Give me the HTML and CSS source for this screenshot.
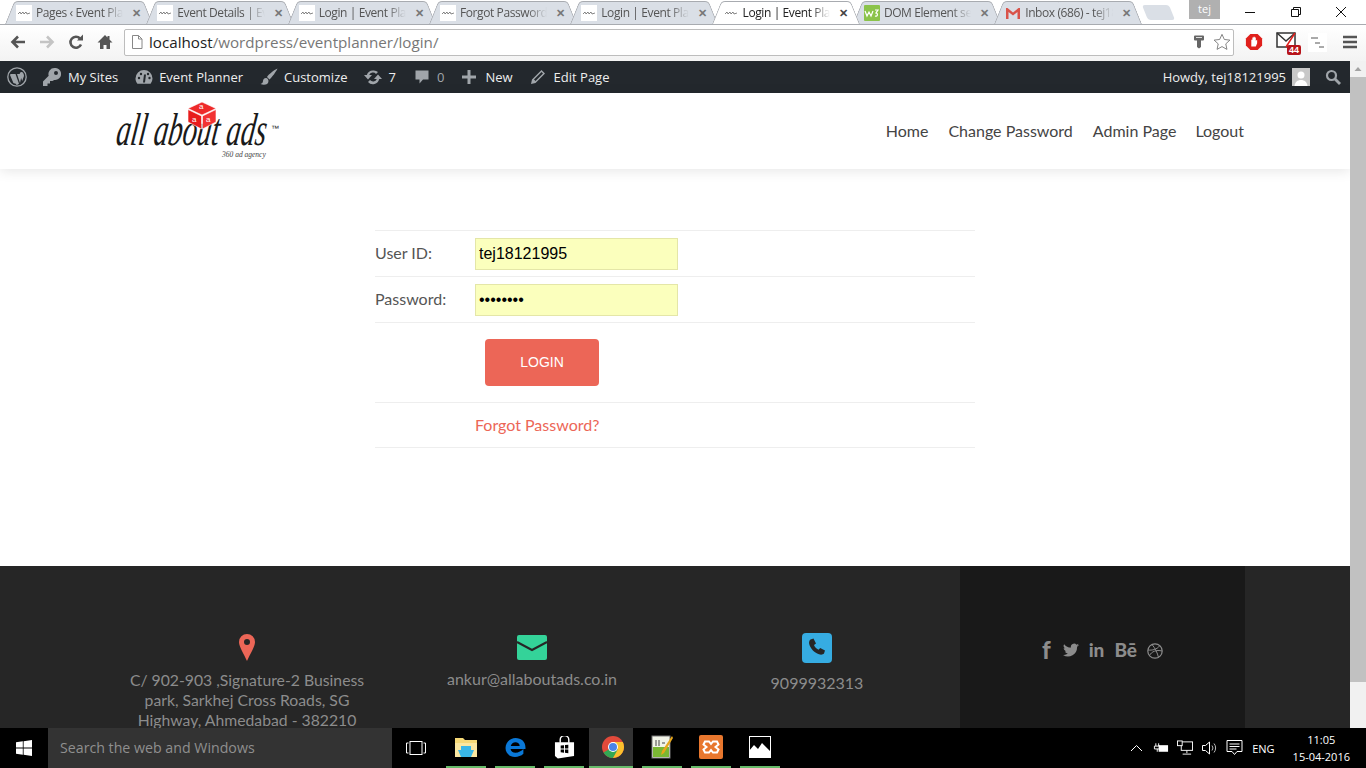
FILE: index.html
```html
<!DOCTYPE html>
<html lang="en">
<head>
    <meta charset="UTF-8">
    <meta name="viewport" content="width=device-width, initial-scale=1.0">
    <title>Login | Event Planner</title>
    <link rel="stylesheet" href="styles.css">
</head>
<body>
    <!-- browser window -->
    <div class="tabstrip">
        <div class="tab"><svg class="fav" viewBox="0 0 16 16"><rect width="16" height="16" fill="#fff"/><path d="M2 9l2-2 1 2 2-2 1 2 2-2 1 2 3-1" fill="none" stroke="#555" stroke-width=".7"/></svg><span class="tab-title">Pages ‹ Event Planner</span><span class="tab-x">✕</span></div>
        <div class="tab"><svg class="fav" viewBox="0 0 16 16"><rect width="16" height="16" fill="#fff"/><path d="M2 9l2-2 1 2 2-2 1 2 2-2 1 2 3-1" fill="none" stroke="#555" stroke-width=".7"/></svg><span class="tab-title">Event Details | Event</span><span class="tab-x">✕</span></div>
        <div class="tab"><svg class="fav" viewBox="0 0 16 16"><rect width="16" height="16" fill="#fff"/><path d="M2 9l2-2 1 2 2-2 1 2 2-2 1 2 3-1" fill="none" stroke="#555" stroke-width=".7"/></svg><span class="tab-title">Login | Event Planner</span><span class="tab-x">✕</span></div>
        <div class="tab"><svg class="fav" viewBox="0 0 16 16"><rect width="16" height="16" fill="#fff"/><path d="M2 9l2-2 1 2 2-2 1 2 2-2 1 2 3-1" fill="none" stroke="#555" stroke-width=".7"/></svg><span class="tab-title">Forgot Password | Ev</span><span class="tab-x">✕</span></div>
        <div class="tab"><svg class="fav" viewBox="0 0 16 16"><rect width="16" height="16" fill="#fff"/><path d="M2 9l2-2 1 2 2-2 1 2 2-2 1 2 3-1" fill="none" stroke="#555" stroke-width=".7"/></svg><span class="tab-title">Login | Event Planner</span><span class="tab-x">✕</span></div>
        <div class="tab tab-active"><svg class="fav" viewBox="0 0 16 16"><rect width="16" height="16" fill="#fff"/><path d="M2 9l2-2 1 2 2-2 1 2 2-2 1 2 3-1" fill="none" stroke="#555" stroke-width=".7"/></svg><span class="tab-title">Login | Event Planner</span><span class="tab-x">✕</span></div>
        <div class="tab"><svg class="fav" viewBox="0 0 16 16"><rect width="16" height="16" rx="1" fill="#8bc34a"/><path d="M1 6l2 5 2-4 2 4 2-5" fill="none" stroke="#fff" stroke-width="1.2"/><path d="M11 5h3l-2 3c2 0 2 4-1 3" fill="none" stroke="#fff" stroke-width="1.2"/></svg><span class="tab-title">DOM Element seque</span><span class="tab-x">✕</span></div>
        <div class="tab"><svg class="fav" viewBox="0 0 16 16"><path d="M1 3v11h2.500V7L8 10.500 12.500 7v7H15V3h-1.500L8 7.500 2.500 3z" fill="#d9534a"/></svg><span class="tab-title">Inbox (686) - tej1812</span><span class="tab-x">✕</span></div>
        <div class="tab-new"></div>
        <div class="win-user">tej</div>
        <div class="win-btns">
            <svg viewBox="0 0 12 12" width="12" height="12"><path d="M1 6.500h10" stroke="#111" fill="none"/></svg>
            <svg viewBox="0 0 12 12" width="12" height="12"><path d="M1.500 3.500h7v7h-7zM3.500 3.500v-2h7v7h-2" stroke="#111" fill="none"/></svg>
            <svg viewBox="0 0 12 12" width="12" height="12"><path d="M1 1l10 10M11 1L1 11" stroke="#111" fill="none"/></svg>
        </div>
    </div>

    <div class="toolbar">
        <div class="nav-btns">
            <svg viewBox="0 0 16 16" width="16" height="16"><path d="M8 2.500L2.500 8 8 13.500M3 8h12" fill="none" stroke="#555" stroke-width="2.600"/></svg>
            <svg viewBox="0 0 16 16" width="16" height="16"><path d="M8 2.500L13.500 8 8 13.500M13 8H1" fill="none" stroke="#c4c4c4" stroke-width="2.600"/></svg>
            <svg viewBox="0 0 16 16" width="16" height="16"><path d="M13 10.500A5.500 5.500 0 1 1 12 4.500" fill="none" stroke="#555" stroke-width="2.600"/><path d="M9 6.500h6v-6z" fill="#555"/></svg>
            <svg viewBox="0 0 16 16" width="16" height="16"><path d="M8 1L0.500 8.500H3V15h3.500v-4h3v4H13V8.500h2.500L12.500 5.500V2h-2v1.500z" fill="#555"/></svg>
        </div>
        <div class="omnibox">
            <svg viewBox="0 0 12 14" width="12" height="14"><path d="M1.500 .5h6l3.500 3.500v9.500h-9.500zM7.500 .5V4h3.500" fill="#fff" stroke="#888"/></svg>
            <span class="url"><span class="url-host">localhost</span>/wordpress/eventplanner/login/</span>
            <svg class="omni-key" viewBox="0 0 10 14" width="10" height="14"><path d="M1 .5h8a1 1 0 0 1 1 1v3a1 1 0 0 1-1 1H7V12l-2 1.500L3 12V5.500H1a1 1 0 0 1-1-1v-3a1 1 0 0 1 1-1z" fill="#666"/><path d="M2 2.500h6" stroke="#ddd"/></svg>
            <svg viewBox="0 0 20 20" width="18" height="18"><path d="M10 1.500l2.600 5.700 6.200.7-4.600 4.200 1.300 6.100-5.500-3.100-5.500 3.100 1.300-6.100L1.200 7.900l6.200-.7z" fill="#fff" stroke="#777"/></svg>
        </div>
        <div class="ext-btns">
            <svg viewBox="0 0 20 20" width="18" height="18"><path d="M6 1h8l5 5v8l-5 5H6l-5-5V6z" fill="#e0201c"/><path d="M7 15V7.500h1.200V5h1.300v-.7h1.300V5h1.200v3.500l1.500-1v4L12 15z" fill="#fff"/></svg>
            <div class="ext-mail">
                <svg viewBox="0 0 20 16" width="20" height="16"><rect x="1" y="1" width="18" height="14" fill="#fff" stroke="#333" stroke-width="1.500"/><path d="M1 1l9 8 9-8" fill="none" stroke="#333" stroke-width="1.500"/><path d="M10 15L19 1" stroke="#e0201c" stroke-width="1.500"/></svg>
                <span class="ext-badge">44</span>
            </div>
            <svg viewBox="0 0 19 19" width="19" height="19"><rect width="19" height="19" fill="#fff"/><path d="M3 5h7M7 10h5M11 14h5" stroke="#555"/></svg>
            <svg class="ext-menu" viewBox="0 0 14 14" width="14" height="14"><path d="M0 2h14M0 7h14M0 12h14" stroke="#555" stroke-width="2.500"/></svg>
        </div>
    </div>

    <div class="viewport">
        <div class="page">
            <div class="adminbar">
                <div class="ab-left">
                    <span class="ab-item ab-wp"><svg viewBox="0 0 20 20" width="20" height="20"><circle cx="10" cy="10" r="9.200" fill="none" stroke="#a0a5aa" stroke-width="1.300"/><path d="M3 7h5.500L12 16.800l-1.500 1-1 .2zM6 7l3.400 10-3 -.9L3 8zM10 7h5l-2 9z" fill="#a0a5aa"/><path d="M14.500 5a2 2 0 0 0-1.500 3l2.200 6 1.800-5c0-2-1-4-2.500-4z" fill="#a0a5aa"/></svg></span>
                    <span class="ab-item ab-gap7"><svg viewBox="0 0 18 18" width="18" height="18"><path d="M11.500 0a6 6 0 0 0-5.800 7.800L0 13.500V18h4.500v-2.500H7v-2.500h2.500l1.700-1.100A6 6 0 1 0 11.500 0zm1.500 3a2 2 0 1 1 0 4 2 2 0 0 1 0-4z" fill="#a0a5aa"/></svg>My Sites</span>
                    <span class="ab-item"><svg viewBox="0 0 18 18" width="18" height="18"><path d="M9 2a8.500 8.500 0 0 0-8.500 8.500c0 2 .7 3.800 1.900 5.300h13.200a8.500 8.500 0 0 0 1.900-5.300A8.500 8.500 0 0 0 9 2z" fill="#a0a5aa"/><path d="M9 14.500l1-8" stroke="#23282d" stroke-width="2"/><circle cx="4" cy="10" r="1.200" fill="#23282d"/><circle cx="6" cy="6" r="1.200" fill="#23282d"/><circle cx="13" cy="6" r="1.200" fill="#23282d"/><circle cx="14.500" cy="10" r="1.200" fill="#23282d"/></svg>Event Planner</span>
                    <span class="ab-item ab-short"><svg viewBox="0 0 18 18" width="18" height="18"><path d="M17.500.5C14 2 9 6 7 9l2.500 2.500C12 9 16 4 17.500.5zM6 10c-2 0-3 1.500-3 3 0 1.500-1 2.500-2.500 3 3 1.500 8 1 8-3 0-1.500-1-3-2.500-3z" fill="#a0a5aa"/></svg>Customize</span>
                    <span class="ab-item ab-gap7 ab-long"><svg viewBox="0 0 18 18" width="18" height="18"><path d="M9 2.500A6.500 6.500 0 0 0 2.800 7H0l4 4.500L8 7H5.200A4 4 0 0 1 12 6l2-2a6.500 6.500 0 0 0-5-1.500zM14 6.500L10 11h2.800A4 4 0 0 1 6 12l-2 2a6.500 6.500 0 0 0 11.200-3H18z" fill="#a0a5aa"/></svg>7</span>
                    <span class="ab-item ab-gap7"><svg viewBox="0 0 16 16" width="16" height="16"><path d="M1.500 1.500h13v9H9l-3.500 4v-4h-4z" fill="#a0a5aa"/></svg><span class="ab-count">0</span></span>
                    <span class="ab-item ab-gap8"><svg viewBox="0 0 16 16" width="16" height="16"><path d="M6.500 1h3v5.500H15v3H9.500V15h-3V9.500H1v-3h5.500z" fill="#a0a5aa"/></svg>New</span>
                    <span class="ab-item ab-gap8"><svg viewBox="0 0 16 16" width="16" height="16"><path d="M11.500 1L15 4.500 5.500 14 1 15l1-4.500zM4 10.500l1.500 1.500 7.500-7.500-1.500-1.500z" fill="#a0a5aa" fill-rule="evenodd"/></svg>Edit Page</span>
                </div>
                <div class="ab-right">
                    <span class="ab-howdy">Howdy, tej18121995</span>
                    <svg viewBox="0 0 18 18" width="18" height="18"><rect width="18" height="18" fill="#c8c8c8"/><circle cx="9" cy="7" r="3.500" fill="#fff"/><path d="M2.500 18c.5-4 3-6 6.500-6s6 2 6.500 6z" fill="#fff"/></svg>
                    <svg class="ab-search" viewBox="0 0 16 16" width="16" height="16"><circle cx="6.500" cy="6.500" r="4.500" fill="none" stroke="#a0a5aa" stroke-width="2.200"/><path d="M10 10l5 5" stroke="#a0a5aa" stroke-width="2.800"/></svg>
                </div>
            </div>

            <header class="site-header">
                <div class="container header-row">
                    <a class="logo" href="#">
                        <svg viewBox="0 0 170 64" width="170" height="64">
                            <text class="logo-word" transform="translate(0 44) skewX(-8) scale(1 2.100)" textLength="150" lengthAdjust="spacingAndGlyphs">all about ads</text>
                            <text class="logo-tm" x="156" y="30">™</text>
                            <text class="logo-sub" x="107" y="56">360 ad agency</text>
                            <path d="M73 7.500L87 1l14 6.500-14 6.500z" fill="#ee2a2a" stroke="#fff" stroke-width=".6"/>
                            <path d="M73 8.500l13.500 6.500v13L73 21z" fill="#e81c1c" stroke="#fff" stroke-width=".6"/>
                            <path d="M101 8.500L87.500 15v13L101 21z" fill="#f23333" stroke="#fff" stroke-width=".6"/>
                            <text class="logo-cube" x="84" y="8">a</text>
                            <text class="logo-cube" x="77" y="21">a</text>
                            <text class="logo-cube" x="91" y="21">a</text>
                        </svg>
                    </a>
                    <nav class="main-nav">
                        <a href="#">Home</a>
                        <a href="#">Change Password</a>
                        <a href="#">Admin Page</a>
                        <a href="#">Logout</a>
                    </nav>
                </div>
            </header>

            <main class="login-wrap">
                <form class="login-form">
                    <table class="login-table">
                        <tr>
                            <td class="col-label"><label for="userId">User ID:</label></td>
                            <td><input id="userId" type="text" value="tej18121995"></td>
                        </tr>
                        <tr>
                            <td class="col-label"><label for="pass">Password:</label></td>
                            <td><input id="pass" type="password" value="password"></td>
                        </tr>
                        <tr class="row-submit">
                            <td></td>
                            <td><button type="button" class="btn-login">LOGIN</button></td>
                        </tr>
                        <tr class="row-forgot">
                            <td></td>
                            <td class="cell-forgot"><a class="forgot" href="#">Forgot Password?</a></td>
                        </tr>
                    </table>
                </form>
            </main>

            <footer class="site-footer">
                <div class="container footer-row">
                    <div class="foot-col">
                        <svg class="foot-icon foot-pin" viewBox="0 0 16 27" width="16" height="27"><path d="M8 0a8 8 0 0 0-8 8c0 5 5 12 8 19 3-7 8-14 8-19a8 8 0 0 0-8-8zm0 5a3 3 0 1 1 0 6 3 3 0 0 1 0-6z" fill="#ec6657" fill-rule="evenodd"/></svg>
                        <p class="foot-addr">C/ 902-903 ,Signature-2 Business park, Sarkhej Cross Roads, SG Highway, Ahmedabad - 382210</p>
                    </div>
                    <div class="foot-col">
                        <svg class="foot-icon foot-mail" viewBox="0 0 30 25" width="30" height="25"><rect width="30" height="25" rx="2" fill="#34d399"/><path d="M0 7l15 8 15-8" fill="none" stroke="#262626" stroke-width="2"/></svg>
                        <p>ankur@allaboutads.co.in</p>
                    </div>
                    <div class="foot-col">
                        <svg class="foot-icon" viewBox="0 0 30 30" width="30" height="30"><rect width="30" height="30" rx="4" fill="#36ace2"/><path d="M8.500 6.500l3-1 2.500 5-2 1.500c.8 2.200 2.300 3.700 4.500 4.700l1.700-1.800 4.800 2.600-1 3c-1 1.200-3 1.500-5 .8-5-2-8.500-5.500-9.800-10.300-.3-2 0-3.500 1.300-4.500z" fill="#262626"/></svg>
                        <p class="foot-phone">9099932313</p>
                    </div>
                    <div class="foot-social">
                        <span class="soc-txt soc-f">f</span>
                        <svg viewBox="0 0 18 15" width="16" height="14"><path d="M18 2a7 7 0 0 1-2 .6A3.600 3.600 0 0 0 17.500.6a7 7 0 0 1-2.300.9A3.600 3.600 0 0 0 9 4.800 10 10 0 0 1 1.300.9a3.600 3.600 0 0 0 1.100 4.900 3.500 3.500 0 0 1-1.600-.5c0 1.800 1.200 3.300 2.900 3.700a3.600 3.600 0 0 1-1.600 0c.5 1.500 1.800 2.500 3.400 2.500A7.200 7.200 0 0 1 0 13a10.200 10.200 0 0 0 15.800-9.100A7 7 0 0 0 18 2z" fill="#8c8c8c"/></svg>
                        <span class="soc-txt">in</span>
                        <span class="soc-txt">Bē</span>
                        <svg viewBox="0 0 16 16" width="16" height="16"><circle cx="8" cy="8" r="7.200" fill="none" stroke="#8c8c8c" stroke-width="1.200"/><path d="M5 1.500c3 3.500 5.500 8.500 6.500 13M1 7c4 .5 9-.5 11.500-4M2.500 12.500c2-4 7-6 12.500-4.500" fill="none" stroke="#8c8c8c"/></svg>
                    </div>
                </div>
            </footer>
        </div>
        <div class="scrollbar">
            <svg viewBox="0 0 16 16" width="16" height="16"><path d="M4.500 10L8 6l3.500 4z" fill="#a3a3a3"/></svg>
            <div class="scroll-thumb"></div>
        </div>
    </div>

    <!-- windows taskbar -->
    <div class="taskbar">
        <div class="start"><svg viewBox="0 0 16 16" width="16" height="16"><path d="M0 2.300l6.800-1v6.300H0zM7.600 1.200L16 0v7.600H7.600zM0 8.400h6.800v6.300l-6.800-1zM7.600 8.400H16V16l-8.400-1.200z" fill="#fff"/></svg></div>
        <div class="task-search">Search the web and Windows</div>
        <div class="task-view"><svg viewBox="0 0 20 14" width="20" height="14"><rect x="4" y=".5" width="12" height="13" fill="none" stroke="#fff"/><path d="M2.500 2H.5v10h2M17.500 2h2v10h-2" fill="none" stroke="#fff"/></svg></div>
        <div class="task-apps">
            <div class="app"><svg viewBox="0 0 22 20" width="22" height="20"><path d="M0 1h8l2 2h12v17H0z" fill="#f6d978"/><path d="M0 6h22v14H0z" fill="#fbe7a1"/><path d="M6 9h10v4h3l-3 7H6l-3-7h3z" fill="#39b7e8"/></svg></div>
            <div class="app"><svg viewBox="0 0 20 20" width="21" height="21"><path d="M10 1C5 1 .5 5 .5 10.500c0 5 4 8.500 9 8.500 3 0 6-1 8-3v-4.500c-2 2-4.500 3.500-7.500 3.500-2.500 0-4.500-1.200-4.700-3.500H19.500V10C19.500 4.500 15.500 1 10 1zM5.500 8.500C6 6.500 7.800 5 10 5s3.800 1.200 4 3.500z" fill="#0a78d7" fill-rule="evenodd"/></svg></div>
            <div class="app"><svg viewBox="0 0 22 24" width="21" height="23"><path d="M6.500 7V4a4.500 4.500 0 0 1 9 0v3" fill="none" stroke="#fff" stroke-width="1.500"/><path d="M1 6.500h20V21L4 23.500 1 21z" fill="#fff"/><path d="M7 10l3.500-.4v3.400H7zM11.500 9.500L15 9v4h-3.500zM7 14h3.500v3.400L7 17zM11.500 14H15v4l-3.500-.4z" fill="#000"/></svg></div>
            <div class="app app-active"><svg viewBox="0 0 22 22" width="22" height="22"><circle cx="11" cy="11" r="11" fill="#e24a3b"/><path d="M11 11L1.500 16.500A11 11 0 0 0 11 22l5.500-8.500z" fill="#34a853"/><path d="M11 6h9.800A11 11 0 0 1 11 22l5-9z" fill="#fbc02d"/><circle cx="11" cy="11" r="5" fill="#fff"/><circle cx="11" cy="11" r="4" fill="#4a84e8"/></svg></div>
            <div class="app"><svg viewBox="0 0 22 24" width="22" height="24"><rect x="1" y="1" width="18" height="22" fill="#f2f4e8" stroke="#777"/><rect x="2" y="12" width="16" height="10" fill="#7ab733"/><path d="M5 5v6M8 5v6M11 8h3" stroke="#444"/><path d="M21 1L11 16l-1 4 3-2L22 3z" fill="#e8a71c"/></svg></div>
            <div class="app"><svg viewBox="0 0 24 24" width="24" height="24"><rect width="24" height="24" rx="2" fill="#e8772e"/><path d="M6 6.500h4l2 2.500 2-2.500h4l1.500 3-3 2.500 3 2.500-1.500 3h-4L12 15l-2 2.500H6l-1.500-3 3-2.500-3-2.500z" fill="none" stroke="#fff" stroke-width="2"/></svg></div>
            <div class="app"><svg viewBox="0 0 22 22" width="22" height="22"><rect x=".5" y=".5" width="21" height="21" fill="#000" stroke="#fff"/><path d="M0 22V15l5-6 4 4 4-6 9 9v6z" fill="#fff"/></svg></div>
        </div>
        <div class="tray">
            <svg class="tray-up" viewBox="0 0 12 8" width="13" height="8"><path d="M.5 7L6 1.500 11.500 7" fill="none" stroke="#fff"/></svg>
            <svg viewBox="0 0 17 12" width="16" height="12"><path d="M3 1v3M6 1v3M1.500 4h6v3h-6zM4.500 7v3" stroke="#fff" fill="none"/><rect x="6" y="3" width="10" height="7" fill="#fff"/></svg>
            <svg viewBox="0 0 17 16" width="16" height="16"><rect x="4.500" y="1.500" width="12" height="9" fill="none" stroke="#fff"/><rect x=".5" y=".5" width="5" height="5" fill="#000" stroke="#fff"/><path d="M10.500 10.500v3M6 14.500h9" stroke="#fff"/></svg>
            <svg viewBox="0 0 16 14" width="17" height="14"><path d="M1 4.500h3L8 1v12L4 9.500H1z" fill="none" stroke="#fff"/><path d="M10.500 4.500a4 4 0 0 1 0 5M12.500 2.500a7 7 0 0 1 0 9" fill="none" stroke="#bbb"/></svg>
            <svg viewBox="0 0 16 16" width="17" height="16"><path d="M.5 .5h15v11h-5L8 14.500l-2.500-3h-5zM3 4h10M3 6.500h10M3 9h7" fill="none" stroke="#fff"/></svg>
            <span class="tray-lang">ENG</span>
            <div class="tray-clock"><span>11:05</span><span>15-04-2016</span></div>
        </div>
    </div>
</body>
</html>
```

FILE: styles.css
```css
* {
    box-sizing: border-box;
}

html, body {
    margin: 0;
    padding: 0;
    height: 768px;
    overflow: hidden;
}

body {
    display: flex;
    flex-direction: column;
    font-family: "Lato", sans-serif;
    background: #fff;
}

svg {
    display: block;
    flex-shrink: 0;
}

a {
    text-decoration: none;
}

/* browser chrome */
.tabstrip {
    height: 24px;
    display: flex;
    align-items: flex-end;
    padding-left: 5px;
    background: #fff;
    font-family: "Open Sans", sans-serif;
    position: relative;
}

.tab {
    position: relative;
    z-index: 1;
    isolation: isolate;
    width: 148px;
    height: 23px;
    margin-right: -6.700px;
    padding: 0 12px 0 11px;
    display: flex;
    align-items: center;
    flex-shrink: 0;
    font-size: 12px;
    letter-spacing: -0.4px;
    color: #555;
}

.tab::before,
.tab::after {
    content: "";
    position: absolute;
    z-index: -1;
    top: 0;
    bottom: 0;
    width: 50%;
    background: #dadfe6;
    border-top: 1px solid #a8abb0;
}

.tab::before {
    left: 0;
    border-left: 1px solid #a8abb0;
    border-radius: 4px 0 0 0;
    transform: skewX(-22deg);
    transform-origin: bottom left;
}

.tab::after {
    right: 0;
    border-right: 1px solid #a8abb0;
    border-radius: 0 4px 0 0;
    transform: skewX(22deg);
    transform-origin: bottom right;
}

.tab-active {
    z-index: 2;
    color: #222;
}

.tab-active::before,
.tab-active::after {
    background: #fff;
}

.fav {
    width: 16px;
    height: 16px;
    margin-right: 4px;
}

.tab-title {
    width: 88px;
    white-space: nowrap;
    overflow: hidden;
    -webkit-mask-image: linear-gradient(90deg, #000 78%, transparent 100%);
    mask-image: linear-gradient(90deg, #000 78%, transparent 100%);
}

.tab-x {
    margin-left: 9px;
    font-size: 11px;
    font-weight: 700;
    color: #777;
}

.tab-active .tab-x {
    color: #444;
}

.tab-new {
    width: 27px;
    height: 15px;
    margin-left: 9px;
    margin-bottom: 4px;
    background: #dadfe6;
    border-radius: 3px;
    transform: skewX(22deg);
}

.win-user {
    position: absolute;
    left: 1189px;
    top: 0;
    width: 31px;
    height: 19px;
    background: #b0b0b0;
    color: #fff;
    font-size: 11px;
    text-align: center;
    line-height: 17px;
}

.win-btns {
    position: absolute;
    left: 1244px;
    top: 6px;
    width: 103px;
    display: flex;
    justify-content: space-between;
}

.toolbar {
    height: 37px;
    display: flex;
    align-items: center;
    background: linear-gradient(#fff, #f3f3f3);
    border-top: 1px solid #a8abb0;
    font-family: "Open Sans", sans-serif;
    padding-bottom: 2px;
}

.nav-btns {
    width: 124px;
    padding: 0 11px 0 10px;
    display: flex;
    justify-content: space-between;
}

.omnibox {
    width: 1110px;
    height: 27px;
    display: flex;
    align-items: center;
    gap: 6px;
    padding: 0 2px 0 6px;
    background: #fff;
    border: 1px solid #bdbdbd;
    border-radius: 2px;
}

.url {
    flex: 1;
    font-size: 15.200px;
    color: #777;
    white-space: nowrap;
}

.url-host {
    color: #222;
}

.omni-key {
    margin-right: 3px;
}

.ext-btns {
    flex: 1;
    display: flex;
    align-items: center;
    padding-left: 11px;
}

.ext-mail {
    position: relative;
    width: 24px;
    height: 20px;
    margin-left: 13px;
}

.ext-mail + svg {
    margin-left: 8px;
}

.ext-menu {
    margin-left: 16px;
}

.ext-badge {
    position: absolute;
    right: -1px;
    bottom: -3px;
    padding: 0 2px;
    background: #b7141a;
    color: #fff;
    font: 700 9px/10px "Liberation Sans", sans-serif;
    border-radius: 2px;
}

/* page */
.viewport {
    flex: 1;
    display: flex;
    min-height: 0;
}

.page {
    width: 1350px;
    overflow: hidden;
    display: flex;
    flex-direction: column;
}

.adminbar {
    height: 32px;
    flex-shrink: 0;
    display: flex;
    justify-content: space-between;
    align-items: center;
    background: #23282d;
    color: #eee;
    font-family: "Open Sans", sans-serif;
    font-size: 13px;
}

.ab-left,
.ab-right {
    display: flex;
    align-items: center;
}

.ab-left {
    padding-left: 7px;
}

.ab-item {
    display: flex;
    align-items: center;
    gap: 6px;
    margin-right: 17px;
}

.ab-wp {
    margin-right: 16px;
}

.ab-gap7 {
    gap: 7px;
}

.ab-gap8 {
    gap: 8px;
}

.ab-short {
    margin-right: 16px;
}

.ab-long {
    margin-right: 18px;
}

.ab-count {
    color: #a0a5aa;
}

.ab-right {
    gap: 6px;
    padding-right: 9px;
}

.ab-search {
    margin-left: 9px;
}

.site-header {
    height: 76px;
    flex-shrink: 0;
    background: #fff;
    box-shadow: 0 2px 12px rgba(0, 0, 0, 0.1);
    position: relative;
}

.container {
    width: 1140px;
    margin: 0 auto;
}

.header-row {
    height: 100%;
    display: flex;
    justify-content: space-between;
    align-items: center;
}

.logo {
    margin-left: 10px;
    margin-top: 4px;
}

.logo-word {
    font-family: "Liberation Serif", serif;
    font-style: italic;
    font-size: 22px;
    fill: #1a1a1a;
}

.logo-tm {
    font-family: "Liberation Sans", sans-serif;
    font-size: 8px;
    fill: #222;
}

.logo-sub {
    font-family: "Liberation Serif", serif;
    font-style: italic;
    font-size: 7.500px;
    fill: #444;
}

.logo-cube {
    font-family: "Liberation Sans", sans-serif;
    font-size: 8px;
    fill: #fff;
}

.main-nav {
    display: flex;
    gap: 20px;
    font-size: 16px;
    padding-bottom: 2px;
    padding-right: 1px;
}

.main-nav a {
    color: #444;
}

.main-nav a:last-child {
    margin-left: -1px;
}

.login-wrap {
    height: 397px;
    flex-shrink: 0;
    padding-top: 61px;
}

.login-form {
    width: 600px;
    margin: 0 auto;
}

.login-table {
    width: 100%;
    border-collapse: collapse;
    font-size: 16px;
    color: #555;
}

.login-table tr {
    height: 46px;
    border-top: 1px solid #eee;
    border-bottom: 1px solid #eee;
}

.login-table td {
    padding: 0;
    vertical-align: middle;
}

.login-table .col-label {
    width: 100px;
    padding-bottom: 2px;
}

.login-table .cell-forgot {
    padding-bottom: 2px;
}

.login-table input {
    display: block;
    width: 203px;
    height: 32px;
    padding: 0 3px;
    background: #fbffbd;
    border: 1px solid #e4e6a8;
    color: #000;
    font-family: "Liberation Sans", sans-serif;
    font-size: 16px;
}

.login-table .row-submit {
    height: 80px;
}

.login-table .row-forgot {
    height: 45px;
}

.btn-login {
    display: block;
    width: 114px;
    height: 47px;
    margin-left: 10px;
    padding: 0 0 2px;
    background: #ec6657;
    border: 0;
    border-radius: 4px;
    color: #fff;
    font-family: "Liberation Sans", sans-serif;
    font-size: 14px;
}

.forgot {
    color: #ec6657;
}

.site-footer {
    flex: 1;
    background: #262626;
    color: #8c8c8c;
    font-size: 16px;
    line-height: 20px;
}

.footer-row {
    height: 100%;
    display: flex;
}

.foot-col {
    width: 285px;
    padding: 67px 21px 0 20px;
    text-align: center;
}

.foot-col p {
    margin: 9px 0 0;
}

.foot-col .foot-addr {
    font-size: 15.750px;
}

.foot-icon {
    margin: 0 auto;
}

.foot-pin {
    margin-top: 1px;
}

.foot-mail {
    margin-top: 2px;
}

.foot-col .foot-phone {
    margin-top: 10px;
}

.foot-social {
    width: 285px;
    background: #191919;
    display: flex;
    justify-content: center;
    align-items: flex-start;
    gap: 10px;
    padding-top: 75px;
}

.foot-social svg {
    margin-top: 2px;
}

.soc-txt {
    font-size: 19px;
    font-weight: 900;
    line-height: 18px;
}

.soc-f {
    font-size: 24px;
    margin-right: 2px;
}

.scrollbar {
    width: 16px;
    background: #f1f1f1;
    display: flex;
    flex-direction: column;
    align-items: center;
}

.scroll-thumb {
    width: 16px;
    height: 605px;
    background: #c1c1c1;
}

/* windows taskbar */
.taskbar {
    height: 40px;
    flex-shrink: 0;
    display: flex;
    align-items: center;
    background: #000;
    color: #fff;
    font-family: "Open Sans", sans-serif;
}

.start {
    width: 48px;
    display: flex;
    justify-content: center;
}

.task-search {
    width: 344px;
    height: 40px;
    padding-left: 12px;
    background: #333;
    color: #8f8f8f;
    font-size: 14.200px;
    line-height: 40px;
}

.task-view {
    width: 48px;
    display: flex;
    justify-content: center;
}

.task-apps {
    display: flex;
    margin-left: 6px;
    gap: 9px;
}

.app {
    width: 40px;
    height: 40px;
    display: flex;
    justify-content: center;
    align-items: center;
    border-bottom: 2px solid #67bb6a;
}

.app-active {
    width: 44px;
    margin-left: -4px;
    padding-left: 4px;
    background: #333;
}

.tray {
    margin-left: auto;
    display: flex;
    align-items: center;
    gap: 8px;
    padding-right: 16px;
    font-size: 11px;
}

.tray-up {
    margin-right: 2px;
}

.tray-lang {
    margin-left: 1px;
    margin-right: 10px;
}

.tray-clock {
    display: flex;
    flex-direction: column;
    align-items: center;
    line-height: 17px;
}
```
